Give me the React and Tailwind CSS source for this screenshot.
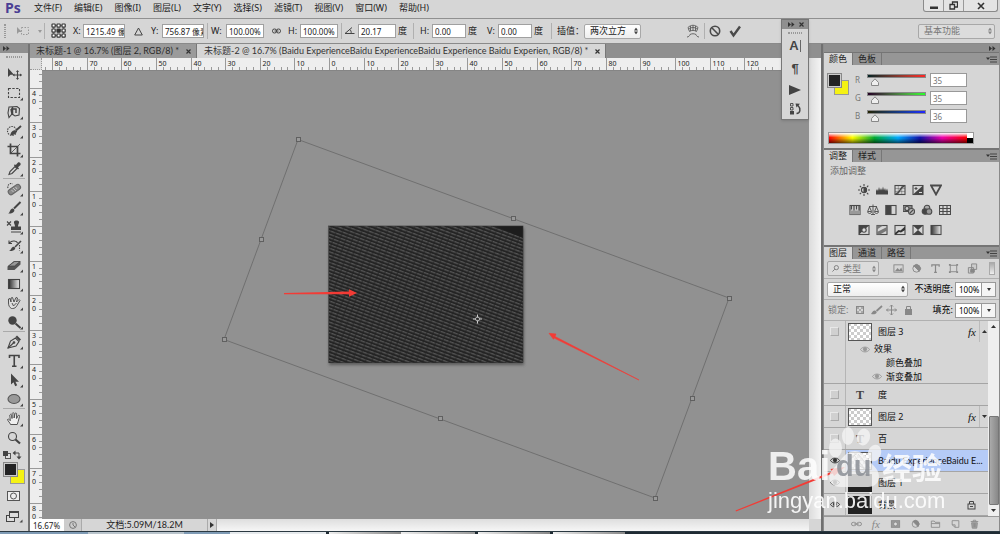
import React, { useState } from "react";

const icon = "h-4 w-4 shrink-0";

function Svg({ children, className = icon, box = "0 0 16 16" }) {
  return (
    <svg viewBox={box} className={className} fill="none" stroke="#4a4a4a" strokeWidth="1.1" aria-hidden="true">
      {children}
    </svg>
  );
}

const toolIcons = {
  移动: (
    <>
      <path d="M2 2v9l2.500-2.200H8z" fill="#444" stroke="none" />
      <path d="M11.500 5v8M7.500 9h8" />
      <path d="M11.500 4l1.500 2h-3zM11.500 14l1.500-2h-3zM6.500 9l2-1.500v3zM16 9l-2-1.500v3z" fill="#444" stroke="none" />
    </>
  ),
  矩形选框: <rect x="2.500" y="3.500" width="11" height="9" strokeDasharray="2.400 1.400" />,
  套索: (
    <>
      <path d="M3 3l8-.5 2.500 2-.5 6.500-4 1-3-2-3 3.500L2 9z" />
      <path d="M5 5l5 0v4M6.500 3v8M5 5l1 5" strokeWidth="1.500" />
    </>
  ),
  快速选择: (
    <>
      <circle cx="6" cy="8" r="4.500" strokeDasharray="1.500 1" />
      <path d="M15 3l-5 4.500" strokeWidth="1.800" />
      <path d="M4.500 12c0-3 3-5.500 5.500-4.500 1 2-1 5-5.500 4.500z" fill="#444" stroke="none" />
    </>
  ),
  裁剪: (
    <>
      <path d="M4.500 1.500v10h10M1.500 4.500h10v10" strokeWidth="1.700" />
      <path d="M5 11l9-9" strokeWidth=".8" />
    </>
  ),
  吸管: (
    <>
      <path d="M3 13.500l1-3 5-5 2 2-5 5z" />
      <path d="M8 4.500l4 4 1-1-1-1.200L14.500 4c.8-1.500-1-3.200-2.500-2.500L9.800 4l-1-.8z" fill="#444" stroke="none" />
    </>
  ),
  修复画笔: (
    <>
      <path d="M2 7c-1-3 2-5.500 4.500-4" strokeDasharray="1.500 1" />
      <rect x="1.500" y="6" width="13.500" height="5.500" rx="2.500" transform="rotate(-35 8 8.500)" fill="#888" stroke="#666" />
      <path d="M7 7l3 3M9.500 6l1.500 2M5.500 9l2 2" strokeWidth=".7" stroke="#ddd" />
    </>
  ),
  画笔: (
    <>
      <path d="M14.500 2l-6.500 6.500" strokeWidth="1.900" />
      <path d="M2 13.500c2-.5 1.800-3.800 3.800-4.800 1.500-.6 3.200.8 2.400 2.500-1 2-3.700 2.600-6.200 2.300z" fill="#444" stroke="none" />
    </>
  ),
  仿制图章: (
    <>
      <path d="M8 2.500c1-1.500 4-1.500 5 0 .5 1.500-1 2.500-1 5h3v3.500H5V7.500h4c0-2.500-1.500-3.500-1-5z" fill="#444" stroke="none" />
      <path d="M5 13h10M1 2.500l4 4M5 2.500l-4 4" />
    </>
  ),
  历史记录画笔: (
    <>
      <path d="M3 2.500v3h3M3.500 5C6 1.800 11 3 11.500 5" />
      <path d="M15 3l-6 6" strokeWidth="1.600" />
      <path d="M3 13c2-.5 2-3.500 4-4.300 1.500-.2 2.800.9 2 2.300-1 1.600-3.500 2.300-6 2z" fill="#444" stroke="none" />
      <path d="M13.500 7v5.500" strokeDasharray="1.500 1" />
    </>
  ),
  橡皮擦: (
    <>
      <path d="M1.500 9.500L8 4h6.500v3.500L8.500 13h-7z" fill="#555" stroke="none" />
      <path d="M2.500 9l6-4.500H14L8.500 9z" fill="#999" stroke="#444" strokeWidth=".7" />
    </>
  ),
  渐变: (
    <>
      <defs>
        <linearGradient id="tool-grad">
          <stop offset="0" stopColor="#2a2a2a" />
          <stop offset="1" stopColor="#eee" />
        </linearGradient>
      </defs>
      <rect x="2.500" y="3.500" width="11" height="9" fill="url(#tool-grad)" />
    </>
  ),
  涂抹: (
    <path d="M5.500 13.500c-2-1-3-3-3-5.500V4l1.500-.5L5 7V3l1.500-.5L8 7l2-4.500 1.500.5-1 4 2.500-2.500 1 1-3 5c-1 2-2.500 3-4.500 3zM6 8l1.500 3 3-3" fill="#ddd" strokeWidth=".9" />
  ),
  加深: (
    <>
      <circle cx="6.500" cy="6.500" r="4.200" fill="#444" stroke="none" />
      <path d="M9.500 9.500l5 4.500" strokeWidth="2" />
    </>
  ),
  钢笔: (
    <>
      <path d="M2 14l2.500-7 5-3 3.500 3.500-3 4.500z" />
      <path d="M9.500 3l1.500-1.500L15 5.500 13.500 7z" fill="#444" stroke="none" />
      <path d="M2 14l5.500-5" />
      <circle cx="8" cy="8.500" r=".8" fill="#444" />
    </>
  ),
  文字: <path d="M3.500 5V2.500h9.500V5M8.250 2.500V13M6 13.200h4.500" strokeWidth="1.600" />,
  路径选择: <path d="M5 1.500v11l2.500-2.200 1.700 4 2-1-1.800-3.600H13z" fill="#444" stroke="none" />,
  椭圆: <ellipse cx="8" cy="8" rx="6" ry="4.500" fill="#999" stroke="#555" />,
  抓手: (
    <path d="M4.500 13.500c-.5-2-2.500-3-3-5 1-1 2 .2 2.800 1.200L3.800 4c.8-1.200 1.600-.5 1.900.5L6 7.500l.2-5c.6-1.300 1.600-1 1.900.2V7l.9-4.500c.8-1 1.700-.5 1.600.6V7.500l1.600-3c.9-.7 1.600 0 1.300 1l-1.300 5-1 3z" fill="#eee" strokeWidth=".9" />
  ),
  缩放: (
    <>
      <circle cx="6.500" cy="6.500" r="4" />
      <path d="M9.500 9.500l4.500 4" strokeWidth="2.200" />
    </>
  ),
};

const toolGroups = [
  ["移动", "矩形选框", "套索", "快速选择", "裁剪", "吸管"],
  ["修复画笔", "画笔", "仿制图章", "历史记录画笔", "橡皮擦", "渐变", "涂抹", "加深"],
  ["钢笔", "文字", "路径选择", "椭圆"],
  ["抓手", "缩放"],
];

function Swatches() {
  return (
    <svg viewBox="0 0 24 26" className="h-[26px] w-6" aria-label="前景色和背景色">
      <rect x="7.500" y="9.500" width="14" height="14" fill="#f5f214" stroke="#999" />
      <rect x=".5" y="2.500" width="14" height="14" fill="#ccc" stroke="#888" />
      <rect x="2" y="4" width="11" height="11" fill="#232324" />
    </svg>
  );
}

function Toolbar() {
  return (
    <aside className="flex w-[30px] shrink-0 flex-col border-r-2 border-[#747474] bg-[#d6d6d6]">
      <div className="flex h-[9px] shrink-0 items-center bg-[#8f8f8f] pl-[3px]">
        <Chevrons />
      </div>
      <div className="flex h-[11px] shrink-0 justify-center pt-[3px]">
        <div className="h-[2px] w-4 border-y border-dotted border-[#999]" />
      </div>
      {toolGroups.map((group, i) => (
        <div key={i} className="flex shrink-0 flex-col items-center">
          {i > 0 && <div className="h-px w-[22px] bg-[#aaa]" />}
          {group.map((name) => (
            <button key={name} aria-label={name} className="flex h-[19px] w-7 items-center justify-center">
              <svg viewBox="0 0 20 16" className="h-4 w-5" fill="none" stroke="#444" strokeWidth="1.100">
                <g transform="translate(2 0)">{toolIcons[name]}</g>
                {name !== "移动" && name !== "缩放" && <path d="M19 12.500v3h-3z" fill="#444" stroke="none" />}
              </svg>
            </button>
          ))}
        </div>
      ))}
      <div className="flex shrink-0 items-center justify-between px-[2px] pt-[3px]">
        <button aria-label="默认颜色">
          <svg viewBox="0 0 10 10" className="h-[10px] w-[10px]">
            <rect x="3.500" y="3.500" width="5" height="5" fill="#ddd" stroke="#555" />
            <rect x="1" y="1" width="5" height="5" fill="#444" />
          </svg>
        </button>
        <button aria-label="切换颜色" className="mr-1">
          <svg viewBox="0 0 10 10" className="h-[10px] w-[10px]" fill="none" stroke="#444">
            <path d="M2 3h5v4" />
            <path d="M3.500 .5L.5 3l3 2.500zM4.500 6.500h5L7 9.500z" fill="#444" stroke="none" />
          </svg>
        </button>
      </div>
      <button className="ml-[3px] w-6 shrink-0" aria-label="颜色">
        <Swatches />
      </button>
      <button aria-label="快速蒙版" className="flex h-[19px] w-7 items-center justify-center">
        <svg viewBox="0 0 14 10" className="h-[10px] w-[14px]" fill="#eee" stroke="#555">
          <rect x=".5" y=".5" width="12" height="9" />
          <circle cx="6.500" cy="5" r="3" />
        </svg>
      </button>
      <button aria-label="屏幕模式" className="flex h-[22px] w-7 items-center justify-center">
        <svg viewBox="0 0 18 13" className="h-[13px] w-[18px]" fill="#ddd" stroke="#444">
          <rect x="1.500" y="5.500" width="8" height="6" />
          <rect x="4.500" y="1.500" width="9" height="6" />
          <path d="M4.500 2.500h9" />
          <path d="M17.500 9.500v3h-3z" fill="#444" stroke="none" />
        </svg>
      </button>
    </aside>
  );
}

function Chevrons() {
  return (
    <svg viewBox="0 0 7 5" className="h-[5px] w-[7px]" fill="#333" aria-hidden="true">
      <path d="M0 0l3 2.500L0 5zM3.500 0l3 2.500-3 2.500z" />
    </svg>
  );
}

function Stepper({ dim }) {
  return (
    <svg viewBox="0 0 4 7" className="pointer-events-none absolute top-1/2 right-[3px] h-[7px] w-1 -translate-y-1/2" fill={dim ? "#888" : "#444"} aria-hidden="true">
      <path d="M0 3l2-3 2 3zM0 4l2 3 2-3z" />
    </svg>
  );
}

function Picker({ label, options, width, dim, pad = "pl-[5px]" }) {
  return (
    <div className={`relative h-[15px] shrink-0 ${width}`}>
      <select
        aria-label={label}
        className={`h-full w-full appearance-none rounded-[2px] border border-[#a8a8a8] text-[9px] leading-3 outline-none ${pad} ${
          dim ? "bg-[#dcdcdc] text-[#777]" : "bg-gradient-to-b from-white to-[#eee] text-[#222]"
        }`}
      >
        {options.map((o) => (
          <option key={o}>{o}</option>
        ))}
      </select>
      <Stepper dim={dim} />
    </div>
  );
}

const menus = ["文件(F)", "编辑(E)", "图像(I)", "图层(L)", "文字(Y)", "选择(S)", "滤镜(T)", "视图(V)", "窗口(W)", "帮助(H)"];

function MenuBar() {
  return (
    <header className="flex h-[19px] shrink-0 items-start border-b border-[#909090] bg-[#d6d6d6]">
      <div className="w-[34px] shrink-0 pl-[5px] font-['Open_Sans'] text-[14px] leading-4 font-bold text-[#4a3f94]">Ps</div>
      <nav className="flex items-center gap-3 pt-[2px] text-[9px] leading-3 text-[#222]">
        {menus.map((m) => (
          <button key={m}>{m}</button>
        ))}
      </nav>
      <div className="mr-[2px] ml-auto flex h-3 rounded-b-[3px] border border-t-0 border-[#8a8a8a] bg-[#e4e4e4]">
        <button aria-label="最小化" className="flex w-5 items-center justify-center border-r border-[#999]">
          <svg viewBox="0 0 8 8" className="h-2 w-2"><path d="M0 4.500h8v2.500H0z" fill="#333" /></svg>
        </button>
        <button aria-label="还原" className="flex w-5 items-center justify-center border-r border-[#999]">
          <svg viewBox="0 0 9 9" className="h-[9px] w-[9px]" fill="#e4e4e4" stroke="#333" strokeWidth="1.300">
            <path d="M3.500 1h5v5h-5z" /><path d="M1 3.500h4.500v4.500H1z" />
          </svg>
        </button>
        <button aria-label="关闭" className="flex w-[33px] items-center justify-center">
          <svg viewBox="0 0 8 8" className="h-2 w-2" stroke="#333" strokeWidth="1.600"><path d="M1 1l6 6M7 1l-6 6" /></svg>
        </button>
      </div>
    </header>
  );
}

function Field({ label, value, labelClass, inputClass, unit, unitClass }) {
  return (
    <label className="flex shrink-0 items-center">
      <span className={labelClass}>{label}</span>
      <input
        defaultValue={value}
        aria-label={label || "角度"}
        className={`h-[14px] border border-[#a0a0a0] bg-white pl-[2px] text-[8px] text-[#222] outline-none ${inputClass}`}
      />
      {unit && <span className={`pl-[2px] ${unitClass}`}>{unit}</span>}
    </label>
  );
}

function Sep({ className = "" }) {
  return <div className={`h-4 w-px shrink-0 bg-[#b0b0b0] ${className}`} />;
}

function OptionsBar() {
  return (
    <div className="flex h-[25px] shrink-0 items-center border-b border-[#8a8a8a] bg-[#d6d6d6] text-[9px] leading-3 text-[#222]">
      <div className="ml-1 h-[14px] w-[2px] shrink-0 border-x border-dotted border-[#999]" />
      <button aria-label="当前工具" className="ml-[10px] flex w-[26px] shrink-0 items-center justify-between">
        <svg viewBox="0 0 14 10" className="h-[10px] w-[14px]" fill="none" stroke="#999">
          <path d="M1 1v7l2-2h3z" fill="#999" stroke="none" />
          <rect x="5.500" y="1.500" width="7" height="7" strokeDasharray="1.500 1.500" />
        </svg>
        <svg viewBox="0 0 4 3" className="h-[3px] w-1"><path d="M0 0h4L2 3z" fill="#999" /></svg>
      </button>
      <Sep className="ml-[2px]" />
      <button aria-label="参考点" className="ml-[6px] w-4 shrink-0">
        <svg viewBox="0 0 16 16" className="h-4 w-4" fill="#fff" stroke="#333" strokeWidth="1.200">
          <path d="M2.500 2.500h10v10h-10z" fill="none" strokeDasharray="1 1" />
          {[1, 6, 11].map((x) => [1, 6, 11].map((y) => <rect key={`${x}${y}`} x={x} y={y} width="3.200" height="3.200" rx=".6" fill={x === 6 && y === 6 ? "#333" : "#fff"} />))}
        </svg>
      </button>
      <Field label="X:" value="1215.49 像素" labelClass="ml-[6px] w-[10px]" inputClass="w-[42px]" />
      <button aria-label="相对定位" className="flex w-[26px] shrink-0 justify-center">
        <svg viewBox="0 0 9 9" className="h-[9px] w-[9px]" fill="none" stroke="#444"><path d="M4.500 1L8.300 8H.7z" /></svg>
      </button>
      <Field label="Y:" value="756.87 像素" labelClass="w-[11px]" inputClass="w-[42px]" />
      <Sep className="ml-[3px]" />
      <Field label="W:" value="100.00%" labelClass="ml-[3px] w-[15px]" inputClass="w-[38px]" />
      <button aria-label="保持长宽比" className="flex w-6 shrink-0 justify-center">
        <svg viewBox="0 0 9 6" className="h-[6px] w-[9px]" fill="none" stroke="#444">
          <rect x=".5" y="1" width="4" height="4" rx="1.800" /><rect x="4.500" y="1" width="4" height="4" rx="1.800" /><path d="M2.500 3h4" />
        </svg>
      </button>
      <Field label="H:" value="100.00%" labelClass="w-3" inputClass="w-[38px]" />
      <Sep className="ml-[3px]" />
      <svg viewBox="0 0 16 8" className="h-2 w-4 shrink-0" fill="none" stroke="#444"><path d="M10 .5L3 6.500h9.500M7.500 2.500c1.500.5 2 2.500 1.500 4" /></svg>
      <Field label="" value="20.17" labelClass="" inputClass="w-[38px]" unit="度" unitClass="w-[14px]" />
      <Sep className="ml-[3px]" />
      <Field label="H:" value="0.00" labelClass="ml-[6px] w-3" inputClass="w-[34px]" unit="度" unitClass="w-[21px]" />
      <Field label="V:" value="0.00" labelClass="w-[11px]" inputClass="w-[34px]" unit="度" unitClass="w-[18px]" />
      <Sep className="ml-[1px]" />
      <span className="ml-[5px] w-[27px] shrink-0 overflow-hidden whitespace-nowrap">插值：</span>
      <Picker label="插值" options={["两次立方", "邻近", "两次线性"]} width="w-[57px]" />
      <button aria-label="变形" className="ml-11 shrink-0">
        <svg viewBox="0 0 16 16" className="h-4 w-4" fill="none" stroke="#666">
          <path d="M3 4.500c3-3 7-3 10 0l-1.500 4c-2-1.500-5-1.500-7 0zM8 2.300v5M5.500 3v5M10.500 3v5M3.500 6c3-2 6-2 9 0M2 14c1.500 0 2.500-1 3-2.500 2-1 4-1 6 0 .5 1.500 1.500 2.500 3 2.500" />
        </svg>
      </button>
      <Sep className="ml-[3px]" />
      <button aria-label="取消变换" className="ml-[2px] shrink-0">
        <Svg><circle cx="8" cy="8" r="4.700" strokeWidth="1.600" /><path d="M4.800 4.800l6.400 6.400" strokeWidth="1.600" /></Svg>
      </button>
      <button aria-label="提交变换" className="ml-1 shrink-0">
        <Svg><path d="M3.500 8l3 4.500 6.500-9" strokeWidth="2.400" /></Svg>
      </button>
      <div className="mr-[5px] ml-auto">
        <Picker label="工作区" options={["基本功能", "绘画", "摄影"]} width="w-[77px]" dim />
      </div>
    </div>
  );
}

const STEP = 34.6;

function HRuler() {
  const ticks = [];
  for (let i = -42; i < 65; i++) {
    const x = Math.round(287 + (i * STEP) / 5) + 0.5;
    const major = i % 5 === 0;
    if (x < 0) continue;
    ticks.push(<path key={i} d={`M${x} ${major ? 0 : 9}V12`} stroke="#999" />);
    if (major) ticks.push(<text key={`t${i}`} x={x + 2} y="8" fontSize="7" fill="#222">{Math.abs(i * 2)}</text>);
  }
  return <svg className="h-3 min-w-0 flex-1" aria-label="水平标尺">{ticks}</svg>;
}

function VRuler() {
  const ticks = [];
  for (let i = -22; i <= 44; i++) {
    const y = Math.round(156 + (i * STEP) / 5) + 0.5;
    const major = i % 5 === 0;
    if (y < 0) continue;
    ticks.push(<path key={i} d={`M${major ? 0 : 9} ${y}H12`} stroke="#999" />);
    if (major)
      String(Math.abs(i * 2)).split("").forEach((c, k) =>
        ticks.push(<text key={`t${i}-${k}`} x="2" y={y + 7 + k * 8} fontSize="7" fill="#222">{c}</text>)
      );
  }
  return <svg className="h-full w-3" aria-label="垂直标尺">{ticks}</svg>;
}

const corners = [[298, 139], [513, 218], [729, 298], [692, 398], [655, 498], [440, 418], [224, 339], [261, 239]];

function Artwork() {
  return (
    <svg className="absolute top-0 left-0 h-full w-full" aria-label="画布">
      <defs>
        <pattern id="weave" width="6" height="3.300" patternUnits="userSpaceOnUse" patternTransform="rotate(20.17)">
          <rect width="6" height="3.300" fill="#242424" />
          <rect width="4.800" height="1.300" fill="#545454" />
          <rect x="4.800" width="1.200" height="1.300" fill="#383838" />
        </pattern>
        <filter id="soft" x="-5%" y="-5%" width="110%" height="112%">
          <feGaussianBlur stdDeviation="1.500" />
        </filter>
      </defs>
      <g transform="translate(-42 -71)">
        <rect x="329" y="228" width="195" height="137" fill="#444" opacity=".7" filter="url(#soft)" />
        <rect x="329" y="226" width="194" height="137" fill="url(#weave)" />
        <path d="M495 226h28v12z" fill="#1d1d1d" />
        <rect x="328.500" y="226" width="194.500" height="136.500" fill="none" stroke="#333" strokeWidth=".6" />
        <path d="M298 139.500L729 298 655 498 224 339.500z" fill="none" stroke="#707070" />
        {corners.map(([x, y]) => (
          <rect key={`${x}`} x={x - 1.5} y={y - 1.5} width="4" height="4" fill="#999" stroke="#606060" />
        ))}
        <g stroke="#ccc" fill="none">
          <circle cx="477.500" cy="319" r="2" strokeWidth=".8" />
          <path d="M477.500 314.500v3M477.500 320.500v3M473 319h3M479 319h3" />
        </g>
        <path d="M284 293v1.300L349 294.200v2.500l8-3.700-8-3.700v2.300z" fill="#f33b35" />
        <path d="M639 380L555 336.500l1-2.500-7-.7 4.500 6 .7-1.200z" fill="#f33b35" stroke="#f33b35" strokeWidth=".6" />
      </g>
    </svg>
  );
}

function DocTab({ title, active }) {
  return (
    <div className={`flex h-[14px] shrink-0 items-center border-r border-[#777] pr-[5px] ${active ? "bg-[#d6d6d6] pl-[7px] text-[#333]" : "bg-[#9b9b9b] pl-[6px] text-[#2b2b2b]"}`}>
      <button className="whitespace-nowrap">{title}</button>
      <button aria-label="关闭文档" className="ml-[7px]">
        <svg viewBox="0 0 5 5" className="h-[5px] w-[5px]" stroke="#333" strokeWidth="1.200"><path d="M.5 .5l4 4M4.500 .5l-4 4" /></svg>
      </button>
    </div>
  );
}

function DocumentArea() {
  return (
    <main className="flex min-w-0 flex-1 flex-col border-r-2 border-[#707070]">
      <div className="flex h-[14px] shrink-0 bg-[#8f8f8f] font-['Lato','Noto_Sans_CJK_SC',sans-serif] text-[9px] leading-3">
        <DocTab title="未标题-1 @ 16.7% (图层 2, RGB/8) *" />
        <DocTab title="未标题-2 @ 16.7% (Baidu ExperienceBaidu ExperienceBaidu  Experience Baidu Experien, RGB/8) *" active />
      </div>
      <div className="flex min-h-0 flex-1">
        <div className="flex min-w-0 flex-1 flex-col">
          <div className="flex h-3 shrink-0 overflow-hidden bg-[#eee]">
            <div className="w-3 shrink-0 border-r border-b border-dotted border-[#999] bg-[#ddd]" />
            <HRuler />
          </div>
          <div className="flex min-h-0 flex-1">
            <div className="w-3 shrink-0 overflow-hidden bg-[#eee]"><VRuler /></div>
            <div className="relative min-w-0 flex-1 overflow-hidden border-t border-[#858585] bg-[#919191]">
              <Artwork />
            </div>
          </div>
        </div>
        <div className="w-3 shrink-0 bg-gradient-to-r from-[#dcdcdc] to-[#f4f4f4]" />
      </div>
      <div className="flex h-3 shrink-0 items-center bg-[#d6d6d6] text-[8px] leading-3 text-[#222]">
        <input aria-label="缩放比例" defaultValue="16.67%" className="h-full w-[34px] shrink-0 bg-white pl-[3px] leading-3 outline-none" />
        <button aria-label="状态" className="flex h-full w-[18px] shrink-0 items-center justify-center border-r border-[#aaa] bg-[#ccc]">
          <svg viewBox="0 0 8 8" className="h-2 w-2" fill="none" stroke="#777"><circle cx="4" cy="4" r="3.400" /><path d="M4 2v2l2 2" /></svg>
        </button>
        <div className="w-[125px] shrink-0 text-center font-['Lato','Noto_Sans_CJK_SC',sans-serif] text-[9px]">文档:5.09M/18.2M</div>
        <button aria-label="状态菜单" className="flex h-full w-[10px] shrink-0 items-center justify-center border-x border-[#aaa]">
          <svg viewBox="0 0 4 6" className="h-[6px] w-1"><path d="M0 0l4 3-4 3z" fill="#333" /></svg>
        </button>
        <div className="h-full min-w-0 flex-1 bg-gradient-to-b from-[#dedede] to-[#f6f6f6]" />
        <div className="h-full w-3 shrink-0 bg-[#d6d6d6]" />
      </div>
    </main>
  );
}

function PanelTabs({ tabs }) {
  return (
    <div className="flex h-[13px] shrink-0 items-stretch border-t border-[#757575] bg-[#969696] text-[9px] leading-3 text-[#222]">
      {tabs.map((t, i) => (
        <button key={t} className={`border-r border-[#777] px-[5px] ${i === 0 ? "bg-[#d6d6d6]" : ""}`}>{t}</button>
      ))}
      <button aria-label="面板菜单" className="mr-[2px] ml-auto flex items-center">
        <svg viewBox="0 0 11 7" className="h-[7px] w-[11px]"><path d="M0 1.500h4L2 4z" fill="#333" /><path d="M4 1h7M4 3.500h7M4 6h7" stroke="#444" /></svg>
      </button>
    </div>
  );
}

const channels = [
  { name: "R", value: 35, bar: "from-[#002324] to-[#ff2324]" },
  { name: "G", value: 35, bar: "from-[#230024] to-[#23ff24]" },
  { name: "B", value: 36, bar: "from-[#232300] to-[#2323ff]" },
];

function Channel({ name, value, bar }) {
  const [v, setV] = useState(value);
  return (
    <div className="flex h-[18px] items-center text-[8px] text-[#777]">
      <label htmlFor={`ch-${name}`} className="w-3">{name}</label>
      <div className="relative h-[12px] w-[59px]">
        <div className={`h-1 border border-[#888] bg-gradient-to-r ${bar}`} />
        <svg viewBox="0 0 8 8" className="absolute top-1 h-2 w-2 -translate-x-1/2" style={{ left: `${(v / 255) * 100}%` }} fill="#eee" stroke="#888">
          <path d="M.5 7.500v-3L4 .8l3.500 3.700v3z" />
        </svg>
        <input id={`ch-${name}`} type="range" min="0" max="255" value={v} onChange={(e) => setV(+e.target.value)} className="absolute inset-0 w-full opacity-0" />
      </div>
      <input aria-label={`${name} 数值`} value={v} onChange={(e) => setV(+e.target.value || 0)} className="ml-1 h-[14px] w-[37px] border border-[#999] bg-white pl-[2px] outline-none" />
    </div>
  );
}

function ColorPanel() {
  return (
    <section className="flex h-[96px] shrink-0 flex-col">
      <PanelTabs tabs={["颜色", "色板"]} />
      <div className="flex pt-[6px] pl-[3px]">
        <Swatches />
        <div className="ml-1">
          {channels.map((c) => <Channel key={c.name} {...c} />)}
        </div>
      </div>
      <div className="mt-[7px] ml-1 flex h-3 w-[146px] border border-[#999]">
        <div className="relative flex-1 bg-[linear-gradient(to_right,#f00,#ff0_17%,#0a3_33%,#0af_50%,#11a_66%,#e0a_82%,#f00)]">
          <div className="absolute inset-0 bg-[linear-gradient(to_bottom,#fff,transparent_45%,transparent_50%,#0009)]" />
        </div>
        <div className="flex w-[6px] flex-col"><div className="flex-1 bg-white" /><div className="flex-1 bg-black" /></div>
      </div>
    </section>
  );
}

const frame = <rect x="1" y="1.500" width="10" height="9" />;
const adjustments = [
  [
    ["亮度/对比度", <><circle cx="6" cy="6" r="2.600" /><path d="M6 3.500a2.500 2.500 0 010 5z" fill="#444" /><path d="M6 0v2M6 10v2M0 6h2M10 6h2M1.800 1.800l1.300 1.300M9 9l1.300 1.300M1.800 10.200l1.300-1.300M9 3l1.300-1.300" /></>],
    ["色阶", <path d="M0 10.500V7l1-2 1 2 1-4 1 3.500 1-2.500 1 2.500L7 2.500l1 4L9 4l1 3 1-2.500 1 3v3z" fill="#444" stroke="none" />],
    ["曲线", <>{frame}<path d="M1 7.500h10M1 4.500h10M4.300 1.500v9M7.700 1.500v9" strokeWidth=".4" /><path d="M1.500 10C7 9.500 5 3 10.500 2" strokeWidth="1.300" /></>],
    ["曝光度", <>{frame}<path d="M1 10.500l10-9v9z" fill="#444" stroke="none" /><path d="M2.500 4.500h3M4 3v3" /><path d="M7 8.500h3" stroke="#ddd" /></>],
    ["自然饱和度", <path d="M1 1.500h10L6 10.500z" strokeWidth="1.800" />],
  ],
  [
    ["色相/饱和度", <>{frame}<path d="M1 6.500h10v4H1z" fill="#999" stroke="none" /><path d="M2.500 1.500v4M5 1.500v5M7.500 1.500v4M10 1.500v5" strokeWidth="1.200" /></>],
    ["色彩平衡", <path d="M6 .5v10M2 2.500h8M2.500 3L.6 7.500h4zM9.500 3L7.500 7.500h4zM.6 8c.5 2 3.500 2 4 0M7.500 8c.5 2 3.500 2 4 0M4 10.500h4" strokeWidth=".9" />],
    ["黑白", <>{frame}<path d="M1 1.500h5v9H1z" fill="#444" /></>],
    ["照片滤镜", <><path d="M0 1.500h9v6H0z" fill="#888" /><circle cx="4" cy="4.500" r="2" fill="#ccc" /><circle cx="8.500" cy="7.500" r="3" fill="#bbb" /><path d="M7 9l3-3" /></>],
    ["通道混合器", <><circle cx="6" cy="4" r="2.800" fill="#aaa" /><circle cx="4" cy="7.500" r="2.800" fill="#444" /><circle cx="8" cy="7.500" r="2.800" fill="#999" /></>],
    ["颜色查找", <path d="M.5 1.500h11v9H.5zM.5 4.500h11M.5 7.500h11M4 1.500v9M8 1.500v9" />],
  ],
  [
    ["反相", <>{frame}<path d="M1 1.500h10l-10 9z" fill="#444" stroke="none" /><circle cx="6" cy="6" r="2.200" fill="#ddd" /></>],
    ["色调分离", <>{frame}<path d="M1 10.500V8l10-5v3.500L4 10.500z" fill="#777" stroke="none" /><path d="M1 5.500L7 1.500H1z" fill="#777" stroke="none" /></>],
    ["阈值", <>{frame}<path d="M1 9l3.500-3 2 .5L11 2.500v3.500l-4 2.500-2-.5-3 2.500H1z" fill="#333" stroke="none" /></>],
    ["可选颜色", <>{frame}<path d="M1 1.500h10L6 6zM1 10.500h10L6 6z" fill="#444" stroke="none" /></>],
    ["渐变映射", <><defs><linearGradient id="gm"><stop stopColor="#333" /><stop offset="1" stopColor="#eee" /></linearGradient></defs><rect x="1" y="1.500" width="10" height="9" fill="url(#gm)" /></>],
  ],
];

function AdjustPanel() {
  return (
    <section className="flex h-[97px] shrink-0 flex-col border-t border-[#757575]">
      <PanelTabs tabs={["调整", "样式"]} />
      <div className="pt-[3px] pl-[6px] text-[9px] leading-3 text-[#666]">添加调整</div>
      <div className="ml-[22px] flex w-[108px] flex-col gap-[2px] pt-1">
        {adjustments.map((row, i) => (
          <div key={i} className="flex justify-center">
            {row.map(([name, art]) => (
              <button key={name} aria-label={name} className="flex h-[18px] w-[18px] items-center justify-center">
                <Svg box="0 0 12 12" className="h-3 w-3">{art}</Svg>
              </button>
            ))}
          </div>
        ))}
      </div>
    </section>
  );
}

function Eye({ faint }) {
  return (
    <svg viewBox="0 0 10 7" className="h-[7px] w-[10px]" fill="none" stroke={faint ? "#999" : "#333"} aria-hidden="true">
      <path d="M.5 3.500C2.500.3 7.500.3 9.500 3.500 7.500 6.700 2.500 6.700.5 3.500z" />
      <circle cx="5" cy="3.300" r="1.600" fill={faint ? "#999" : "#333"} />
    </svg>
  );
}

function Thumb({ kind }) {
  if (kind === "text") return <span className="w-6 text-center font-['Liberation_Serif'] text-[12px] leading-3 font-bold text-[#444]">T</span>;
  return (
    <svg viewBox="0 0 24 18" className="h-[18px] w-6" aria-hidden="true">
      <defs>
        <pattern id="checks" width="6" height="6" patternUnits="userSpaceOnUse">
          <rect width="6" height="6" fill="#fff" /><path d="M0 0h3v3H0zM3 3h3v3H3z" fill="#ccc" />
        </pattern>
      </defs>
      <rect x=".5" y=".5" width="23" height="17" fill={kind === "dark" ? "#222" : "url(#checks)"} stroke={kind === "dark" ? "#222" : "#555"} />
      {kind === "lines" && <path d="M1 8l7-6M8 12l9 5M10 2l12 14M1 12v5M6 3l10 13" stroke="#888" />}
    </svg>
  );
}

function LayerRow({ name, kind, visible, selected, fx, locked, first }) {
  return (
    <div className={`flex shrink-0 items-stretch ${first ? "h-[21px]" : "h-[22px] border-b border-[#a5a5a5]"}`}>
      <button aria-label={`${name} 可见性`} className="flex w-[22px] items-center justify-center border-r border-[#b5b5b5]">
        {visible ? <Eye /> : <span className="h-[9px] w-[9px] border border-[#e8e8e8] border-r-[#aaa] border-b-[#aaa] bg-[#d0d0d0]" />}
      </button>
      <div className={`flex min-w-0 flex-1 items-center pl-[2px] ${selected ? "bg-[#b5cbf7]" : ""}`}>
        <Thumb kind={kind} />
        <span className={`ml-[6px] min-w-0 flex-1 whitespace-nowrap ${selected ? "font-['Lato','Noto_Sans_CJK_SC',sans-serif]" : ""}`}>{name}</span>
        {locked && (
          <svg viewBox="0 0 9 10" className="mr-3 h-[10px] w-[9px]" fill="none" stroke="#444"><rect x="1" y="4" width="7" height="5" /><path d="M2.500 4V1.500h4V4M3 6.500h3" /></svg>
        )}
        {fx && (
          <>
            <span className="mr-[3px] font-['Liberation_Serif'] text-[11px] italic">fx</span>
            <button aria-label="展开效果" className="flex h-full w-[9px] items-center justify-center border-l border-[#bbb]">
              <svg viewBox="0 0 5 3" className="h-[3px] w-[5px]"><path d={fx === "open" ? "M0 3h5L2.500 0z" : "M0 0h5L2.500 3z"} fill="#333" /></svg>
            </button>
          </>
        )}
      </div>
    </div>
  );
}

function EffectRow({ name, indent, eye, last }) {
  return (
    <div className={`flex h-[14px] shrink-0 ${last ? "border-b border-[#a5a5a5]" : ""}`}>
      <div className="w-[22px] border-r border-[#b5b5b5]" />
      <div className={`flex items-center ${indent}`}>
        <span className="w-[14px]">{eye && <Eye faint />}</span>
        <span>{name}</span>
      </div>
    </div>
  );
}

function Percent({ label }) {
  return (
    <label className="mr-[3px] ml-auto flex items-center text-[9px]">
      <span className="mr-[2px] whitespace-nowrap">{label}</span>
      <input defaultValue="100%" className="h-[15px] w-[27px] border border-[#999] bg-white pl-[3px] text-[8px] outline-none" />
      <span className="flex h-[15px] w-[14px] items-center justify-center border border-l-0 border-[#999] bg-[#f4f4f4]">
        <svg viewBox="0 0 4 3" className="h-[3px] w-1"><path d="M0 0h4L2 3z" fill="#333" /></svg>
      </span>
    </label>
  );
}

const filterIcons = [
  ["像素", <><rect x="1" y="2" width="10" height="8" /><path d="M2 9l3-3.500 2 2L9 5l1.500 4z" fill="#888" stroke="none" /></>],
  ["调整", <><circle cx="6" cy="6" r="4" /><path d="M3 3l6 6a4 4 0 00-6-6z" fill="#888" /></>],
  ["文字", <path d="M2 4V2h8v2M6 2v8M4.500 10.300h3" strokeWidth="1.300" />],
  ["形状", <><path d="M2.500 2.500h7v7h-7z" /><path d="M1 1h2v2H1zM9 1h2v2H9zM1 9h2v2H1zM9 9h2v2H9z" fill="#888" stroke="none" /></>],
  ["智能对象", <><path d="M5 1h5.500v6H5zM1.500 5H7v6H1.500z" fill="#ccc" /><path d="M4 7h4v3H4z" fill="#888" /></>],
];

const footerIcons = [
  ["链接", <><rect x="0" y="4" width="5.500" height="4" rx="2" /><rect x="6.500" y="4" width="5.500" height="4" rx="2" /><path d="M3 6h6" /></>],
  ["样式", null],
  ["蒙版", <><rect x="1" y="2" width="10" height="8" fill="#999" /><circle cx="6" cy="6" r="2.300" fill="#ddd" /></>],
  ["调整层", <><circle cx="6" cy="6" r="4" /><path d="M3 3l6 6a4 4 0 00-6-6z" fill="#888" /></>],
  ["新建组", <path d="M1 10V2.500h3.500l1 1.500H11v6zM1 5.500h10" />],
  ["新建图层", <path d="M2 2h8v8H5.500L2 7zM2 7h3.500v3" />],
  ["删除", <><path d="M2.500 4.500h7l-.8 6.500H3.300z" fill="#aaa" /><path d="M1.500 3h9M4.500 3V1.500h3V3M4.500 5v5M6 5v5M7.500 5v5" /></>],
];

function LayersPanel() {
  return (
    <section className="flex min-h-0 flex-1 flex-col border-t border-[#757575]">
      <PanelTabs tabs={["图层", "通道", "路径"]} />
      <div className="flex h-5 shrink-0 items-center border-b border-[#b0b0b0] pl-[3px]">
        <div className="relative">
          <Picker label="类型" options={["类型", "名称", "效果"]} width="w-[52px]" dim pad="pl-[15px]" />
          <svg viewBox="0 0 8 8" className="pointer-events-none absolute top-1 left-[5px] h-[7px] w-[7px]" fill="none" stroke="#777"><circle cx="5" cy="3" r="2.400" /><path d="M3.200 4.800L.5 7.500" /></svg>
        </div>
        <div className="flex flex-1 items-center justify-between pr-1 pl-[14px]">
          {filterIcons.map(([n, art]) => (
            <button key={n} aria-label={n}>
              <svg viewBox="0 0 12 12" className="h-[11px] w-[11px]" fill="none" stroke="#888">{art}</svg>
            </button>
          ))}
          <button aria-label="滤镜开关" className="ml-1 h-[13px] w-[6px] border border-[#aaa] bg-gradient-to-b from-[#aaa] to-[#eee]" />
        </div>
      </div>
      <div className="flex h-[21px] shrink-0 items-center border-b border-[#b0b0b0] pl-[3px]">
        <Picker label="混合模式" options={["正常", "叠加", "正片叠底"]} width="w-[81px]" />
        <Percent label="不透明度:" />
      </div>
      <div className="flex h-[21px] shrink-0 items-center border-b border-[#b0b0b0] pl-1 text-[9px]">
        <span className="w-[26px] whitespace-nowrap text-[#777]">锁定:</span>
        <svg viewBox="0 0 60 12" className="h-3 w-[60px]" fill="none" stroke="#888">
          <rect x="2.500" y="2.500" width="7" height="7" /><path d="M3 3h2v2H3zM7 3h2v2H7zM5 5h2v2H5zM3 7h2v2H3zM7 7h2v2H7z" fill="#aaa" stroke="none" />
          <path d="M28 2l-5.500 5" strokeWidth="1.700" /><path d="M17 10c1-1 1.500-3.500 3.500-3.500 1.800 0 2.500 1.500 2 2.500-1 1.500-3.500 1.500-5.500 1z" fill="#888" stroke="none" />
          <path d="M37.500 1v10M32.500 6h10M36 2.500L37.500 1 39 2.500M36 9.500l1.500 1.500 1.500-1.500M34 4.500L32.500 6 34 7.500M41 4.500L42.500 6 41 7.500" />
          <rect x="51.500" y="5.500" width="6" height="5" fill="#888" /><path d="M52.500 5V2.500h4V5" />
        </svg>
        <Percent label="填充:" />
      </div>
      <div className="flex min-h-0 flex-1 overflow-hidden">
        <div className="flex min-w-0 flex-1 flex-col text-[9px] leading-3 text-[#111]">
          <LayerRow name="图层 3" kind="checks" fx="open" first />
          <EffectRow name="效果" indent="pl-[14px]" eye />
          <EffectRow name="颜色叠加" indent="pl-[26px]" />
          <EffectRow name="渐变叠加" indent="pl-[26px]" eye last />
          <LayerRow name="度" kind="text" />
          <LayerRow name="图层 2" kind="checks" fx="closed" />
          <LayerRow name="百" kind="text" />
          <LayerRow name="Baidu ExperienceBaidu E..." kind="lines" visible selected />
          <LayerRow name="图层 1" kind="dark" visible />
          <LayerRow name="背景" kind="dark" visible locked />
        </div>
        <div className="flex w-[11px] shrink-0 flex-col items-center justify-between bg-[#efefef] py-1">
          <svg viewBox="0 0 5 3" className="h-[3px] w-[5px]"><path d="M0 3h5L2.500 0z" fill="#333" /></svg>
          <div className="mt-auto mb-1 h-[89px] w-[10px] rounded-[1px] border border-[#777] bg-gradient-to-r from-[#aaa] to-[#888]" />
          <svg viewBox="0 0 5 3" className="h-[3px] w-[5px]"><path d="M0 0h5L2.500 3z" fill="#333" /></svg>
        </div>
      </div>
      <div className="flex h-[15px] shrink-0 items-center justify-between border-t border-[#999] pr-[18px] pl-[26px]">
        {footerIcons.map(([n, art]) => (
          <button key={n} aria-label={n} className="flex h-3 w-3 items-center justify-center">
            {art ? <svg viewBox="0 0 12 12" className="h-[10px] w-[11px]" fill="none" stroke="#888">{art}</svg> : <span className="font-['Liberation_Serif'] text-[11px] leading-3 text-[#888] italic">fx</span>}
          </button>
        ))}
      </div>
    </section>
  );
}

function FloatingPanel() {
  return (
    <div className="absolute top-[19px] right-[191px] flex h-[101px] w-7 flex-col border border-[#777] bg-[#d6d6d6] shadow">
      <div className="flex h-[9px] shrink-0 items-center justify-between bg-[#8f8f8f] pr-[4px] pl-[6px]">
        <Chevrons />
        <svg viewBox="0 0 5 5" className="h-[5px] w-[5px]" stroke="#333" strokeWidth="1.200"><path d="M.5 .5l4 4M4.500 .5l-4 4" /></svg>
      </div>
      <div className="mx-auto mt-[3px] h-[2px] w-[14px] border-y border-dotted border-[#999]" />
      <div className="flex flex-1 flex-col items-center justify-around">
        <button aria-label="字符" className="flex items-center font-['Liberation_Sans'] text-[13px] leading-4 font-bold text-[#444]">A<span className="ml-px h-3 w-px bg-[#666]" /></button>
        <button aria-label="段落" className="font-['Liberation_Sans'] text-[13px] leading-4 font-bold text-[#444]">¶</button>
        <button aria-label="动作"><svg viewBox="0 0 12 10" className="h-[10px] w-3"><path d="M0 0l12 5-12 5z" fill="#444" /></svg></button>
        <button aria-label="历史记录">
          <svg viewBox="0 0 13 13" className="h-[13px] w-[13px]" fill="none" stroke="#444">
            <path d="M1.500 1.500h2.500v2.500h-2.500zM1.500 5.500h2.500v2.500h-2.500z" strokeWidth=".9" /><path d="M1 9h4v3.500H1z" fill="#444" stroke="none" />
            <path d="M7.500 11.500c4 0 4.500-5 1.500-8" strokeWidth="1.400" /><path d="M6.500 1.500l4.500.3L7.500 5.500z" fill="#444" stroke="none" />
          </svg>
        </button>
      </div>
    </div>
  );
}

function Watermark() {
  return (
    <div className="pointer-events-none absolute right-[44px] bottom-[19px] h-[92px] w-[188px] text-white">
      <svg viewBox="0 0 188 92" className="absolute inset-0 h-full w-full overflow-visible" aria-hidden="true">
        <path d="M-32.500 87.500L64 48.500l-1.500-2.500L77 44 66 53l-1.200-2.500L-32 88.500z" fill="#f33b35" />
      </svg>
      <svg viewBox="0 0 188 92" className="absolute inset-0 h-full w-full opacity-80" fill="#f4f4f4" aria-hidden="true">
        <ellipse cx="67.500" cy="25" rx="6.500" ry="9.500" />
        <ellipse cx="80" cy="13" rx="6" ry="9" />
        <ellipse cx="95.500" cy="14" rx="6.500" ry="8.500" transform="rotate(12 95.500 14)" />
        <ellipse cx="106.500" cy="30" rx="6.500" ry="8.500" transform="rotate(20 106.500 30)" />
        <path d="M87 28c9 0 13 9 19 15 9 9 5 21-6 21H73c-13 0-15-12-7-19 7-6 10-17 21-17z" />
      </svg>
      <div className="absolute top-[23px] left-0 flex items-center font-['Liberation_Sans'] text-[40px] leading-10 font-bold opacity-85">
        <span className="w-[68px]">Bai</span>
        <span className="w-[46px] text-[29px] text-[#8b8f96]">du</span>
        <span className="font-['Noto_Sans_CJK_SC'] text-[30px]">经验</span>
      </div>
      <div className="absolute top-[66px] left-0 font-['Liberation_Sans'] text-[22px] leading-6 opacity-90">jingyan.baidu.com</div>
    </div>
  );
}

export default function App() {
  return (
    <div className="relative flex h-screen w-full flex-col overflow-hidden bg-[#d6d6d6] font-['Noto_Sans','Noto_Sans_CJK_SC',sans-serif] text-[9px]">
      <MenuBar />
      <OptionsBar />
      <div className="flex min-h-0 flex-1">
        <Toolbar />
        <DocumentArea />
        <div className="flex w-[177px] shrink-0 flex-col border-x border-[#8a8a8a] bg-[#d6d6d6]">
          <div className="flex h-2 shrink-0 items-center justify-end bg-[#8f8f8f] pr-[3px]"><Chevrons /></div>
          <ColorPanel />
          <AdjustPanel />
          <LayersPanel />
        </div>
      </div>
      <footer className="flex h-[3px] shrink-0 border-t border-[#2b3942] bg-[#1f2b33]">
        <div className="w-[88px] bg-[#7f9bb5]" />
        <div className="w-[96px] bg-[#b9c4cc]" />
        <div className="w-[46px] bg-[#7f9bb5]" />
        <div className="w-[96px] bg-[#e6eaed]" />
        <div className="ml-[3px] w-[72px] bg-gradient-to-r from-[#eee] to-[#888]" />
        <div className="w-[74px] bg-gradient-to-r from-[#eee] to-[#999]" />
        <div className="ml-[3px] w-[72px] bg-gradient-to-r from-[#eee] to-[#888]" />
        <div className="ml-[3px] w-[72px] bg-gradient-to-r from-[#eee] to-[#888]" />
      </footer>
      <FloatingPanel />
      <Watermark />
    </div>
  );
}
